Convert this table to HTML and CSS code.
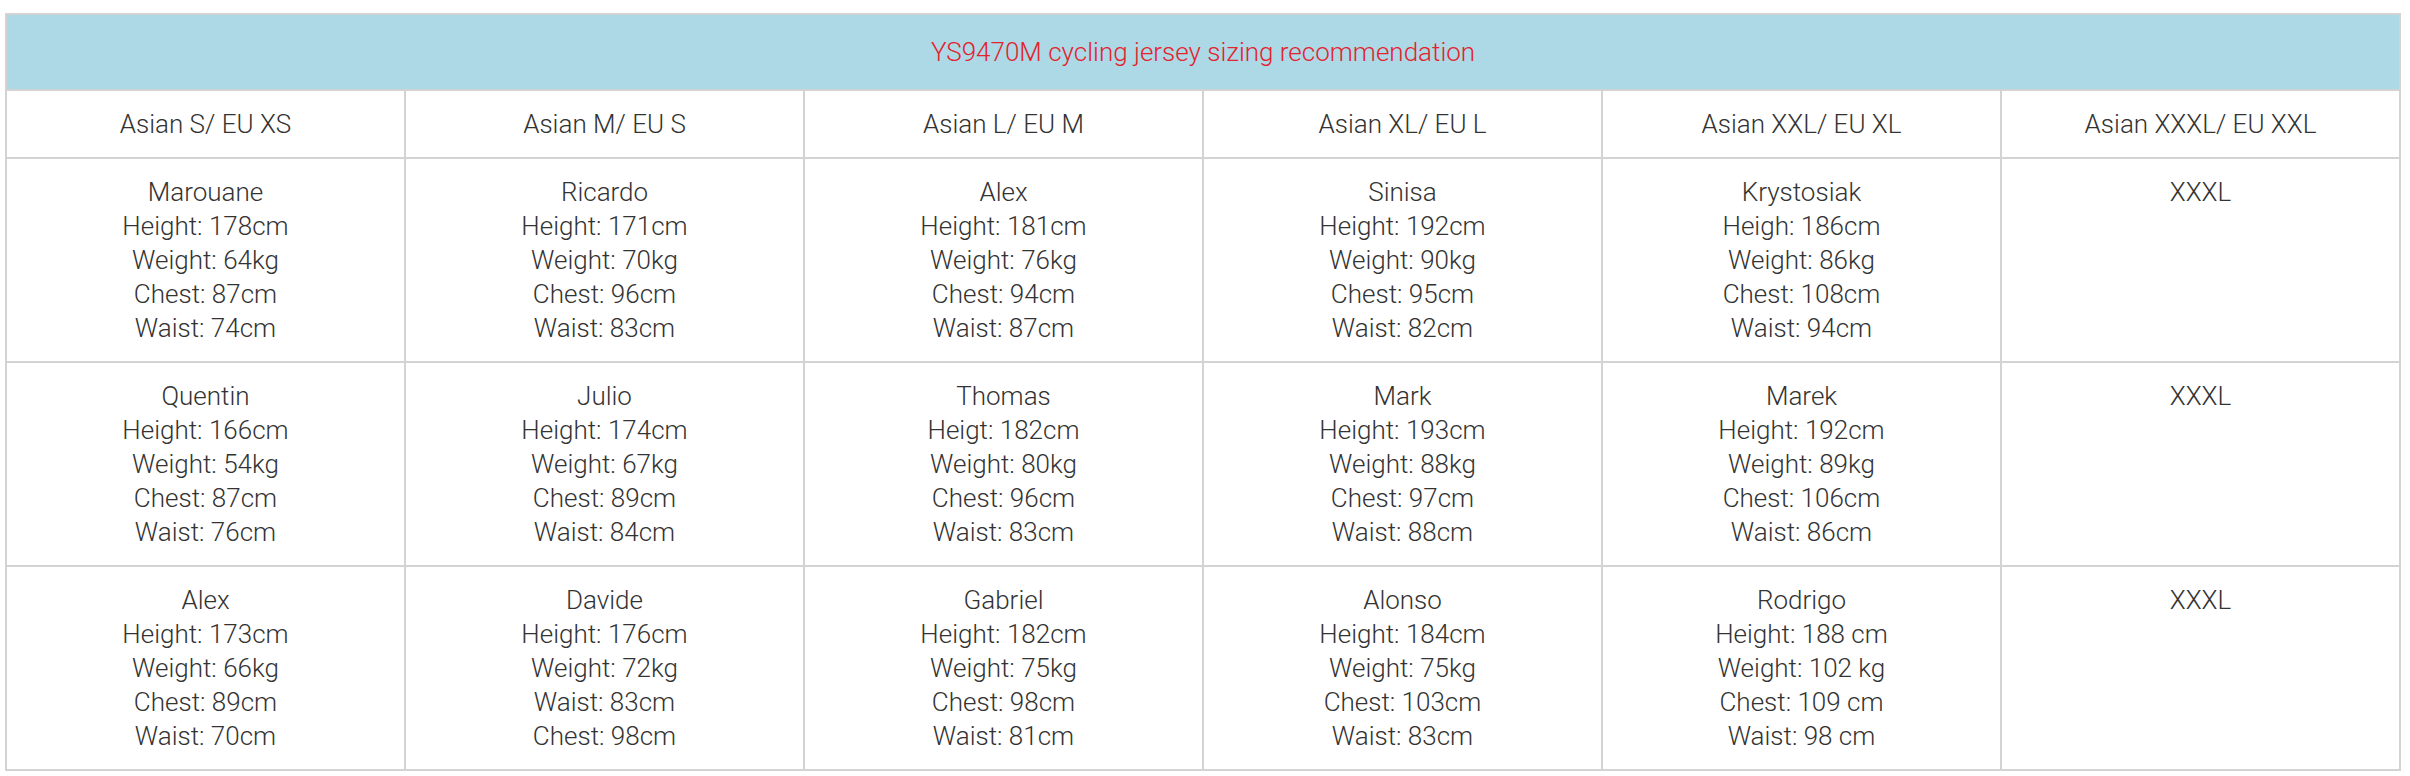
FILE: index.html
```html
<!DOCTYPE html>
<html lang="en">
<head>
<meta charset="utf-8">
<title>YS9470M cycling jersey sizing recommendation</title>
<link rel="stylesheet" href="styles.css">
</head>
<body>
<table class="size-table">
  <thead>
    <tr>
      <th class="title" colspan="6">YS9470M cycling jersey sizing recommendation</th>
    </tr>
    <tr class="sizes">
      <th>Asian S/ EU XS</th>
      <th>Asian M/ EU S</th>
      <th>Asian L/ EU M</th>
      <th>Asian XL/ EU L</th>
      <th>Asian XXL/ EU XL</th>
      <th>Asian XXXL/ EU XXL</th>
    </tr>
  </thead>
  <tbody>
    <tr>
      <td>Marouane<br>Height: 178cm<br>Weight: 64kg<br>Chest: 87cm<br>Waist: 74cm</td>
      <td>Ricardo<br>Height: 171cm<br>Weight: 70kg<br>Chest: 96cm<br>Waist: 83cm</td>
      <td>Alex<br>Height: 181cm<br>Weight: 76kg<br>Chest: 94cm<br>Waist: 87cm</td>
      <td>Sinisa<br>Height: 192cm<br>Weight: 90kg<br>Chest: 95cm<br>Waist: 82cm</td>
      <td>Krystosiak<br>Heigh: 186cm<br>Weight: 86kg<br>Chest: 108cm<br>Waist: 94cm</td>
      <td>XXXL</td>
    </tr>
    <tr>
      <td>Quentin<br>Height: 166cm<br>Weight: 54kg<br>Chest: 87cm<br>Waist: 76cm</td>
      <td>Julio<br>Height: 174cm<br>Weight: 67kg<br>Chest: 89cm<br>Waist: 84cm</td>
      <td>Thomas<br>Heigt: 182cm<br>Weight: 80kg<br>Chest: 96cm<br>Waist: 83cm</td>
      <td>Mark<br>Height: 193cm<br>Weight: 88kg<br>Chest: 97cm<br>Waist: 88cm</td>
      <td>Marek<br>Height: 192cm<br>Weight: 89kg<br>Chest: 106cm<br>Waist: 86cm</td>
      <td>XXXL</td>
    </tr>
    <tr>
      <td>Alex<br>Height: 173cm<br>Weight: 66kg<br>Chest: 89cm<br>Waist: 70cm</td>
      <td>Davide<br>Height: 176cm<br>Weight: 72kg<br>Waist: 83cm<br>Chest: 98cm</td>
      <td>Gabriel<br>Height: 182cm<br>Weight: 75kg<br>Chest: 98cm<br>Waist: 81cm</td>
      <td>Alonso<br>Height: 184cm<br>Weight: 75kg<br>Chest: 103cm<br>Waist: 83cm</td>
      <td>Rodrigo<br>Height: 188 cm<br>Weight: 102 kg<br>Chest: 109 cm<br>Waist: 98 cm</td>
      <td>XXXL</td>
    </tr>
  </tbody>
</table>
</body>
</html>
```
FILE: styles.css
```css
html, body {
  background: #ffffff;
}
body {
  margin: 0;
  padding: 13px 0 0 5px;
  font-family: "Roboto Light", Roboto, "Liberation Sans", Arial, sans-serif;
  font-weight: 300;
  color: #333333;
}
.size-table {
  width: 2396px;
  table-layout: fixed;
  border-collapse: collapse;
  font-size: 26px;
  line-height: 34px;
}
.size-table th,
.size-table td {
  border: 2px solid #d3d3d3;
  padding: 16px 8px;
  text-align: center;
  vertical-align: top;
  font-weight: 300;
}
.size-table .title {
  background: #add8e6;
  color: #e3232d;
  padding: 20px 8px;
}
```
